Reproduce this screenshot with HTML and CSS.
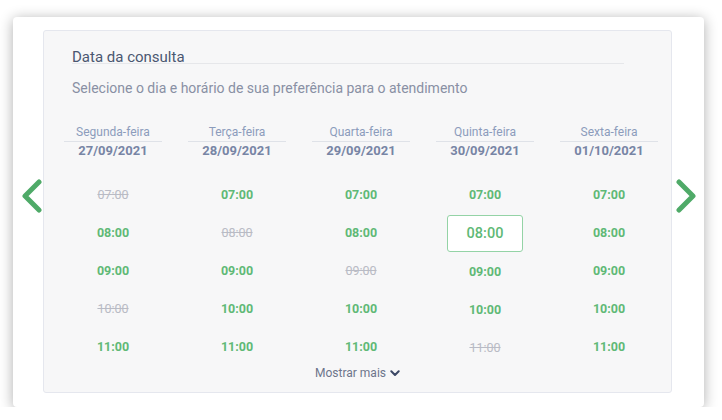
FILE: index.html
```html
<!DOCTYPE html>
<html lang="pt-BR">
<head>
    <meta charset="UTF-8">
    <meta name="viewport" content="width=device-width, initial-scale=1.0">
    <title>Data da consulta</title>
    <link rel="stylesheet" href="styles.css">
</head>
<body>
    <div class="card">
        <button class="nav-arrow prev" aria-label="Semana anterior">
            <svg width="22" height="34" viewBox="0 0 22 34"><path d="M19 3 L5 17 L19 31" fill="none" stroke="currentColor" stroke-width="5" stroke-linecap="round" stroke-linejoin="round"/></svg>
        </button>

        <div class="panel">
            <div class="panel-head">
                <h2 class="panel-title">Data da consulta</h2>
                <p class="panel-subtitle">Selecione o dia e horário de sua preferência para o atendimento</p>
            </div>

            <div class="days">
                <div class="day">
                    <div class="day-head">
                        <div class="day-name">Segunda-feira</div>
                        <div class="day-date">27/09/2021</div>
                    </div>
                    <ul class="slots">
                        <li class="slot taken">07:00</li>
                        <li class="slot">08:00</li>
                        <li class="slot">09:00</li>
                        <li class="slot taken">10:00</li>
                        <li class="slot">11:00</li>
                    </ul>
                </div>
                <div class="day">
                    <div class="day-head">
                        <div class="day-name">Terça-feira</div>
                        <div class="day-date">28/09/2021</div>
                    </div>
                    <ul class="slots">
                        <li class="slot">07:00</li>
                        <li class="slot taken">08:00</li>
                        <li class="slot">09:00</li>
                        <li class="slot">10:00</li>
                        <li class="slot">11:00</li>
                    </ul>
                </div>
                <div class="day">
                    <div class="day-head">
                        <div class="day-name">Quarta-feira</div>
                        <div class="day-date">29/09/2021</div>
                    </div>
                    <ul class="slots">
                        <li class="slot">07:00</li>
                        <li class="slot">08:00</li>
                        <li class="slot taken">09:00</li>
                        <li class="slot">10:00</li>
                        <li class="slot">11:00</li>
                    </ul>
                </div>
                <div class="day">
                    <div class="day-head">
                        <div class="day-name">Quinta-feira</div>
                        <div class="day-date">30/09/2021</div>
                    </div>
                    <ul class="slots">
                        <li class="slot">07:00</li>
                        <li class="slot selected">08:00</li>
                        <li class="slot">09:00</li>
                        <li class="slot">10:00</li>
                        <li class="slot taken">11:00</li>
                    </ul>
                </div>
                <div class="day">
                    <div class="day-head">
                        <div class="day-name">Sexta-feira</div>
                        <div class="day-date">01/10/2021</div>
                    </div>
                    <ul class="slots">
                        <li class="slot">07:00</li>
                        <li class="slot">08:00</li>
                        <li class="slot">09:00</li>
                        <li class="slot">10:00</li>
                        <li class="slot">11:00</li>
                    </ul>
                </div>
            </div>

            <button class="show-more">
                Mostrar mais
                <svg width="10" height="7" viewBox="0 0 10 7"><path d="M1.3 1.3 L5 5 L8.7 1.3" fill="none" stroke="currentColor" stroke-width="2" stroke-linecap="round" stroke-linejoin="round"/></svg>
            </button>
        </div>

        <button class="nav-arrow next" aria-label="Próxima semana">
            <svg width="22" height="34" viewBox="0 0 22 34"><path d="M3 3 L17 17 L3 31" fill="none" stroke="currentColor" stroke-width="5" stroke-linecap="round" stroke-linejoin="round"/></svg>
        </button>
    </div>
</body>
</html>
```

FILE: styles.css
```css
body {
    margin: 0;
    background-color: #fff;
    font-family: Roboto, "Liberation Sans", sans-serif;
}
.card {
    display: flex;
    align-items: flex-start;
    width: 691px;
    height: 390px;
    box-sizing: border-box;
    margin: 17px 0 0 13px;
    padding: 13px 0 14px 0;
    background-color: #fff;
    border-radius: 4px;
    box-shadow: 0 2px 14px rgba(0, 0, 0, 0.32);
}
.nav-arrow {
    flex: none;
    display: flex;
    justify-content: center;
    margin-top: 149px;
    padding: 0;
    border: none;
    background: none;
    color: #4faa68;
    cursor: pointer;
}
.nav-arrow.prev {
    width: 30px;
    padding-left: 5px;
}
.nav-arrow.next {
    width: 32px;
    padding-right: 2px;
}
.panel {
    flex: none;
    width: 629px;
    height: 363px;
    box-sizing: border-box;
    background-color: #f7f7f8;
    border: 1px solid #e5e7ee;
    border-radius: 3px;
    padding-top: 21px;
}
.panel-head {
    padding-left: 28px;
}
.panel-title {
    width: 552px;
    margin: 0;
    font-size: 15px;
    font-weight: 400;
    line-height: 11px;
    color: #4b5771;
    border-bottom: 1px solid #e6e7ea;
}
.panel-subtitle {
    margin: 16px 0 0 0;
    font-size: 14px;
    line-height: 16px;
    color: #8990a4;
}
.days {
    display: grid;
    grid-template-columns: repeat(5, 98px);
    column-gap: 26px;
    margin: 29px 0 0 20px;
}
.day {
    text-align: center;
}
.day-name {
    font-size: 12px;
    line-height: 14px;
    color: #8c9cbc;
    border-bottom: 1px solid #dfe2e8;
    padding-bottom: 2px;
}
.day-date {
    font-size: 13px;
    font-weight: 700;
    line-height: 17px;
    color: #7785a5;
}
.slots {
    list-style: none;
    margin: 18px 0 0 0;
    padding: 0;
    display: flex;
    flex-direction: column;
    align-items: center;
    gap: 2px;
}
.slot {
    height: 36px;
    line-height: 36px;
    font-size: 12.5px;
    font-weight: 700;
    color: #5fb976;
}
.slot.taken {
    font-weight: 400;
    color: #b9bbc5;
    text-decoration: line-through;
}
.slot.selected {
    width: 76px;
    height: 37px;
    box-sizing: border-box;
    line-height: 35px;
    font-size: 14.5px;
    font-weight: 500;
    border: 1px solid #94d3a6;
    border-radius: 3px;
    background-color: #fff;
}
.show-more {
    display: flex;
    align-items: center;
    gap: 4px;
    margin: 0 auto;
    padding: 0;
    border: none;
    background: none;
    font-family: inherit;
    font-size: 12px;
    color: #6d758b;
    cursor: pointer;
}
.show-more svg {
    color: #3c4866;
}
```
